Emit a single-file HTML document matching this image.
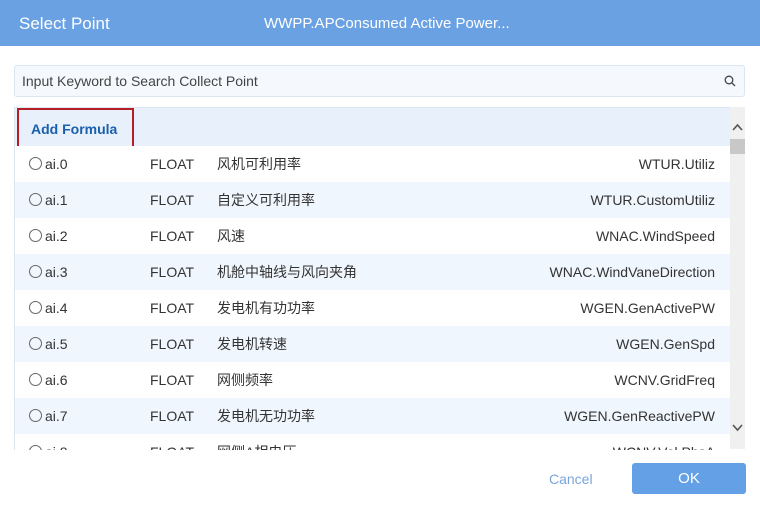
<!DOCTYPE html>
<html><head><meta charset="utf-8"><style>
body{margin:0;width:760px;height:517px;background:#fff;font-family:"Liberation Sans","Noto Sans CJK SC",sans-serif;font-size:14px;color:#333;overflow:hidden;position:relative}
.hd{position:absolute;left:0;top:0;width:760px;height:46px;background:#69a1e3;color:#fff}
.hd .t{position:absolute;left:19px;top:14px;font-size:17px}
.hd .m{position:absolute;left:264px;top:15px;font-size:15px}
.search{position:absolute;left:14px;top:65px;width:729px;height:30px;border:1px solid #dbe6f3;border-radius:3px;background:#f5f9fd}
.search span{position:absolute;left:7px;top:7px;color:#444}
.list{position:absolute;left:14px;top:107px;width:716px;height:342px;overflow:hidden;border-left:1px solid #dbe6f3;border-top:1px solid #dbe6f3}
.fh{height:38px;background:#e8f0fb;position:relative}
.fh div{position:absolute;left:2px;top:0;width:117px;height:42px;border:2px solid #b51e24;box-sizing:border-box;color:#1a5fae;font-weight:bold;font-size:14px;padding:11px 0 0 12px}
.r{height:36px;position:relative;white-space:nowrap}
.r span{position:absolute;top:0;line-height:36px;height:36px}
.r span.rad{left:14px;top:11px;width:11px;height:11px;border:1px solid #666;border-radius:50%;line-height:normal}
.sb{position:absolute;left:730px;top:107px;width:15px;height:342px;background:#f0f0f0}
.ok{position:absolute;left:632px;top:463px;width:114px;height:31px;background:#64a0e6;border-radius:3px;color:#fff;text-align:center;line-height:31px;font-size:15px}
.cancel{position:absolute;left:549px;top:471px;color:#7aa5dc;font-size:14px}
</style></head><body>
<div class="hd"><span class="t">Select Point</span><span class="m">WWPP.APConsumed Active Power...</span></div>
<div class="search"><span>Input Keyword to Search Collect Point</span>
<svg style="position:absolute;right:8px;top:9px" width="12" height="12" viewBox="0 0 12 12"><circle cx="5" cy="5" r="3.8" fill="none" stroke="#444" stroke-width="1.3"/><path d="M8 8L11 11" stroke="#444" stroke-width="1.3"/></svg></div>
<div class="list">
<div class="fh"><div>Add Formula</div></div>
<div>
<div class="r" style="background:#fff"><span class="rad"></span><span style="left:30px">ai.0</span><span style="left:135px">FLOAT</span><span style="left:202px">风机可利用率</span><span style="right:16px">WTUR.Utiliz</span></div>
<div class="r" style="background:#f0f6fe"><span class="rad"></span><span style="left:30px">ai.1</span><span style="left:135px">FLOAT</span><span style="left:202px">自定义可利用率</span><span style="right:16px">WTUR.CustomUtiliz</span></div>
<div class="r" style="background:#fff"><span class="rad"></span><span style="left:30px">ai.2</span><span style="left:135px">FLOAT</span><span style="left:202px">风速</span><span style="right:16px">WNAC.WindSpeed</span></div>
<div class="r" style="background:#f0f6fe"><span class="rad"></span><span style="left:30px">ai.3</span><span style="left:135px">FLOAT</span><span style="left:202px">机舱中轴线与风向夹角</span><span style="right:16px">WNAC.WindVaneDirection</span></div>
<div class="r" style="background:#fff"><span class="rad"></span><span style="left:30px">ai.4</span><span style="left:135px">FLOAT</span><span style="left:202px">发电机有功功率</span><span style="right:16px">WGEN.GenActivePW</span></div>
<div class="r" style="background:#f0f6fe"><span class="rad"></span><span style="left:30px">ai.5</span><span style="left:135px">FLOAT</span><span style="left:202px">发电机转速</span><span style="right:16px">WGEN.GenSpd</span></div>
<div class="r" style="background:#fff"><span class="rad"></span><span style="left:30px">ai.6</span><span style="left:135px">FLOAT</span><span style="left:202px">网侧频率</span><span style="right:16px">WCNV.GridFreq</span></div>
<div class="r" style="background:#f0f6fe"><span class="rad"></span><span style="left:30px">ai.7</span><span style="left:135px">FLOAT</span><span style="left:202px">发电机无功功率</span><span style="right:16px">WGEN.GenReactivePW</span></div>
<div class="r" style="background:#fff"><span class="rad"></span><span style="left:30px">ai.8</span><span style="left:135px">FLOAT</span><span style="left:202px">网侧A相电压</span><span style="right:16px">WCNV.Vol.PhsA</span></div>
</div></div>
<div class="sb">
<svg style="position:absolute;left:2px;top:16px" width="11" height="8"><path d="M1 7L5.5 2L10 7" fill="none" stroke="#555" stroke-width="1.6"/></svg>
<div style="position:absolute;left:0;top:32px;width:15px;height:15px;background:#c8c8c8"></div>
<svg style="position:absolute;left:2px;top:317px" width="11" height="8"><path d="M1 1L5.5 6L10 1" fill="none" stroke="#555" stroke-width="1.6"/></svg>
</div>
<span class="cancel">Cancel</span>
<div class="ok">OK</div>
</body></html>
